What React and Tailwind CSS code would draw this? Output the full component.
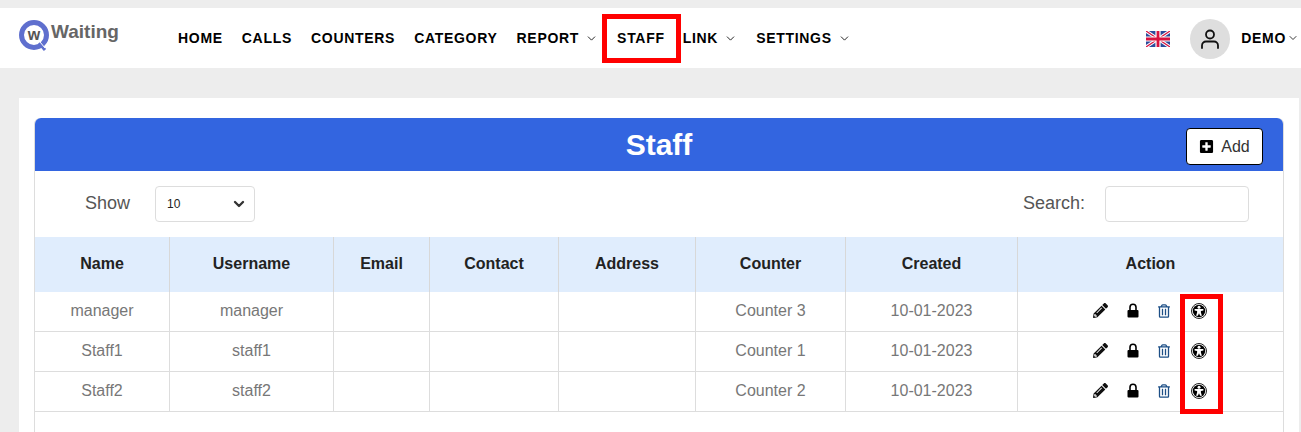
import React from "react";
import { FaPencilAlt, FaRegTrashAlt, FaPlusSquare } from "react-icons/fa";
import { ChevronDown } from "lucide-react";

const nav = [
  { label: "HOME", cls: "ml-[58px]" },
  { label: "CALLS", cls: "ml-[19px]" },
  { label: "COUNTERS", cls: "ml-[19px]" },
  { label: "CATEGORY", cls: "ml-[19px]" },
  { label: "REPORT", cls: "ml-[19px]", chev: true },
  { label: "STAFF", cls: "ml-[19px]" },
  { label: "LINK", cls: "ml-[18px]", chev: true },
  { label: "SETTINGS", cls: "ml-[19px]", chev: true },
];

const cols = [
  ["Name", "w-[135px]"],
  ["Username", "w-[164px]"],
  ["Email", "w-[96px]"],
  ["Contact", "w-[129px]"],
  ["Address", "w-[137px]"],
  ["Counter", "w-[150px]"],
  ["Created", "w-[172px]"],
  ["Action", "w-[265px]"],
];

const rows = [
  ["manager", "manager", "Counter 3"],
  ["Staff1", "staff1", "Counter 1"],
  ["Staff2", "staff2", "Counter 2"],
];

function Logo() {
  return (
    <div className="flex items-start w-[101px]">
      <svg width="33" height="33" viewBox="0 0 33 33" className="shrink-0">
        <circle cx="15" cy="15" r="12.5" fill="none" stroke="#5f6fce" strokeWidth="5" />
        <path d="M20 23l6 7" stroke="#5f6fce" strokeWidth="3" fill="none" />
        <path d="M21 22l5 6" stroke="#fff" strokeWidth="1" fill="none" />
        <text x="15" y="20" textAnchor="middle" fontSize="16" fontWeight="700" fill="#555" fontFamily="Liberation Sans">w</text>
      </svg>
      <span className="-ml-px mt-px text-[19px] leading-[22px] font-bold text-[#666]">Waiting</span>
    </div>
  );
}

function Flag() {
  return (
    <svg width="24" height="16" viewBox="0 0 60 40" className="shrink-0 mt-[2px]">
      <rect width="60" height="40" fill="#2b4a9b" />
      <path d="M0 0L60 40M60 0L0 40" stroke="#fff" strokeWidth="8" />
      <path d="M0 0L60 40M60 0L0 40" stroke="#d8123f" strokeWidth="3" />
      <path d="M30 0V40M0 20H60" stroke="#fff" strokeWidth="13" />
      <path d="M30 0V40M0 20H60" stroke="#d8123f" strokeWidth="7" />
    </svg>
  );
}

function User() {
  return (
    <div className="w-10 h-10 rounded-full bg-[#dedede] flex items-center justify-center ml-[20px] mt-[2px]">
      <svg width="24" height="24" viewBox="0 0 24 24" fill="none" stroke="#111" strokeWidth="1.8" strokeLinecap="round">
        <circle cx="12" cy="7.5" r="4" />
        <path d="M4 21v-2.5a4 4 0 0 1 4-4h8a4 4 0 0 1 4 4V21" />
      </svg>
    </div>
  );
}

function Lock() {
  return (
    <svg width="12" height="15" viewBox="0 0 12 15" className="ml-[19px] shrink-0">
      <path d="M3 8V4.2a3 3 0 0 1 6 0V8" fill="none" stroke="#000" strokeWidth="1.6" />
      <rect x="0.5" y="7" width="11" height="7.5" rx="1" fill="#000" />
    </svg>
  );
}

function Access() {
  return (
    <svg width="16" height="16" viewBox="0 0 16 16" className="ml-[21px] shrink-0">
      <circle cx="8" cy="8" r="7.5" fill="#fff" stroke="#222" strokeWidth="1" />
      <circle cx="8" cy="8" r="6.2" fill="#000" />
      <circle cx="8" cy="4.2" r="1.5" fill="#fff" />
      <path d="M3.6 5.9H12.4V7.4L9.9 7.9V9.4L10.9 12.8H9.1L8 10.2L6.9 12.8H5.1L6.1 9.4V7.9L3.6 7.4Z" fill="#fff" />
    </svg>
  );
}

export default function App() {
  return (
    <div className="relative h-[432px] w-[1301px] overflow-hidden bg-[#ededed] pt-2 font-['Liberation_Sans',Arial,sans-serif]">
      <header className="h-[60px] bg-white flex items-center pl-[19px] pr-[2px]">
        <div className="self-start pt-[12px]"><Logo /></div>
        <nav className="flex items-center">
          {nav.map((n) => (
            <div key={n.label} className={`flex items-center text-[14px] font-bold tracking-[0.7px] text-black ${n.cls}`}>
              {n.label}
              {n.chev && <ChevronDown className="ml-[6px] w-[13px] h-[13px] text-[#222]" strokeWidth={1.8} />}
            </div>
          ))}
        </nav>
        <div className="ml-auto flex items-center">
          <Flag />
          <User />
          <span className="ml-[11px] text-[14px] font-bold tracking-[0.7px] text-black">DEMO</span>
          <ChevronDown className="ml-px w-[12px] h-[12px] text-[#222]" strokeWidth={1.8} />
        </div>
      </header>

      <main className="mt-[30px] ml-[19px] mr-[2px] bg-white pt-5 px-[15px] h-[334px]">
        <section className="border-x border-[#dddddd] rounded-t-[6px] h-full">
          <div className="relative h-[53px] bg-[#3365e0] rounded-t-[6px] flex items-center justify-center">
            <h1 className="text-[30px] font-bold text-white leading-none">Staff</h1>
            <button className="absolute right-[20px] top-[10px] w-[77px] h-[37px] bg-white border border-black rounded-[4px] flex items-center justify-center gap-[7px] text-[16px] text-[#333]">
              <FaPlusSquare className="w-[15px] h-[15px] text-black" />
              Add
            </button>
          </div>

          <div className="h-[66px] flex items-center pl-[50px] pr-[34px] text-[18px] text-[#555]">
            <span className="-mt-px">Show</span>
            <div className="ml-[25px] w-[100px] h-[36px] border border-[#dddddd] rounded-[4px] flex items-center justify-between pl-[11px] pr-[7px] text-[12px] text-[#222]">
              10
              <ChevronDown className="w-4 h-4 text-[#333]" strokeWidth={3.5} />
            </div>
            <span className="ml-auto -mt-px">Search:</span>
            <input className="ml-5 w-[144px] h-[36px] border border-[#dddddd] rounded-[4px]" aria-label="Search" />
          </div>

          <table className="table-fixed border-separate border-spacing-0 w-[1248px] text-[16px]">
            <thead>
              <tr className="h-[55px] bg-[#e0edfd]">
                {cols.map(([c, w], i) => (
                  <th key={c} className={`${w} pb-[2px] font-bold text-[#222] text-center ${i < 7 ? "border-r border-[#d8d8d8]" : ""}`}>{c}</th>
                ))}
              </tr>
            </thead>
            <tbody>
              {rows.map((r) => (
                <tr key={r[0]} className="h-10 text-[#777] text-center">
                  <td className="pb-[2px] border-r border-b border-[#dddddd]">{r[0]}</td>
                  <td className="pb-[2px] border-r border-b border-[#dddddd]">{r[1]}</td>
                  <td className="pb-[2px] border-r border-b border-[#dddddd]"></td>
                  <td className="pb-[2px] border-r border-b border-[#dddddd]"></td>
                  <td className="pb-[2px] border-r border-b border-[#dddddd]"></td>
                  <td className="pb-[2px] border-r border-b border-[#dddddd]">{r[2]}</td>
                  <td className="pb-[2px] border-r border-b border-[#dddddd]">10-01-2023</td>
                  <td className="pb-[2px] border-b border-[#dddddd]">
                    <div className="flex items-center pl-[75px]">
                      <FaPencilAlt className="w-[15px] h-[15px] text-[#111]" />
                      <Lock />
                      <FaRegTrashAlt className="ml-[19px] w-3 h-[14px] text-[#1d4f86]" />
                      <Access />
                    </div>
                  </td>
                </tr>
              ))}
            </tbody>
          </table>
        </section>
      </main>

      <div className="absolute left-[602px] top-[14px] w-[79px] h-[49px] border-[5px] border-[#ff0000]" />
      <div className="absolute left-[1180px] top-[294px] w-[43px] h-[120px] border-[5px] border-[#ff0000]" />
    </div>
  );
}
